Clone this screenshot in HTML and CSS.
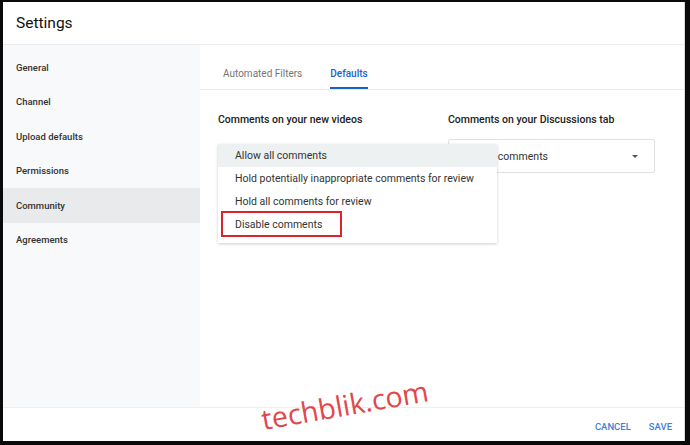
FILE: index.html
```html
<!DOCTYPE html>
<html lang="en">
<head>
    <meta charset="UTF-8">
    <meta name="viewport" content="width=device-width, initial-scale=1.0">
    <title>Settings</title>
    <link rel="stylesheet" href="styles.css">
</head>
<body>
    <div class="frame">
        <div class="dialog">
            <header class="dialog-header">
                <h1>Settings</h1>
            </header>

            <div class="dialog-body">
                <nav class="sidebar">
                    <a href="#" class="nav-item">General</a>
                    <a href="#" class="nav-item">Channel</a>
                    <a href="#" class="nav-item">Upload defaults</a>
                    <a href="#" class="nav-item">Permissions</a>
                    <a href="#" class="nav-item active">Community</a>
                    <a href="#" class="nav-item">Agreements</a>
                </nav>

                <main class="content">
                    <div class="tabs">
                        <a href="#" class="tab">Automated Filters</a>
                        <a href="#" class="tab selected">Defaults</a>
                    </div>

                    <div class="fields">
                        <div class="field">
                            <h3>Comments on your new videos</h3>
                            <div class="select-wrap">
                                <ul class="menu">
                                    <li class="highlight">Allow all comments</li>
                                    <li>Hold potentially inappropriate comments for review</li>
                                    <li>Hold all comments for review</li>
                                    <li class="marked">Disable comments<span class="mark"></span></li>
                                </ul>
                            </div>
                        </div>
                        <div class="field">
                            <h3>Comments on your Discussions tab</h3>
                            <div class="select wide">
                                <span>Allow all comments</span>
                                <span class="caret"></span>
                            </div>
                        </div>
                    </div>
                </main>
            </div>

            <footer class="dialog-footer">
                <button type="button">Cancel</button>
                <button type="button">Save</button>
            </footer>

            <div class="watermark">techblik.com</div>
        </div>
    </div>
</body>
</html>
```

FILE: styles.css
```css
/* Grundlayout */
body {
    margin: 0;
    font-family: Roboto, 'Noto Sans', sans-serif;
    color: #202020;
    background: #000;
}

.frame {
    width: 690px;
    height: 445px;
    box-sizing: border-box;
    border-style: solid;
    border-color: #0a0a0a;
    border-width: 2px 5px 4px 3px;
    background: #fff;
}

.dialog {
    position: relative;
    height: 100%;
    display: flex;
    flex-direction: column;
    border-right: 1px solid #d8d8d8;
    overflow: hidden;
}

.dialog-header {
    height: 42px;
    flex: none;
    display: flex;
    align-items: center;
    padding-left: 13px;
    border-bottom: 1px solid #e9ecef;
}

.dialog-header h1 {
    margin: 0;
    font-size: 15.5px;
    font-weight: 400;
    color: #111;
}

.dialog-body {
    flex: 1;
    display: flex;
    min-height: 0;
}

/* Seitenleiste */
.sidebar {
    width: 197px;
    flex: none;
    background: #f8f9fa;
    padding-top: 5px;
    display: flex;
    flex-direction: column;
}

.nav-item {
    height: 34.5px;
    display: flex;
    align-items: center;
    padding-left: 13px;
    font-size: 9.5px;
    font-weight: 500;
    color: #333;
    text-decoration: none;
}

.nav-item.active {
    background: #e8eaeb;
}

/* Inhalt */
.content {
    flex: 1;
}

.tabs {
    height: 45px;
    box-sizing: border-box;
    display: flex;
    gap: 28px;
    padding-left: 23px;
    border-bottom: 1px solid #e9ecef;
}

.tab {
    display: flex;
    align-items: flex-end;
    padding-bottom: 8px;
    font-size: 10px;
    color: #757575;
    text-decoration: none;
    border-bottom: 2px solid transparent;
}

.tab.selected {
    color: #1a5fd0;
    font-weight: 500;
    border-bottom-color: #1a5fd0;
}

.fields {
    display: flex;
    gap: 37px;
    padding: 23px 0 0 18px;
}

.field h3 {
    margin: 0 0 13px;
    font-size: 10.5px;
    font-weight: 500;
    color: #222;
}

.field:first-child {
    width: 193px;
}

.select-wrap {
    position: relative;
    height: 34px;
}

.select {
    height: 34px;
    box-sizing: border-box;
    display: flex;
    align-items: center;
    justify-content: space-between;
    padding: 0 16px 0 7px;
    border: 1px solid #e0e0e0;
    border-radius: 2px;
    font-size: 10.5px;
    color: #333;
}

.select.wide {
    width: 207px;
}

.caret {
    width: 0;
    height: 0;
    border-left: 3.5px solid transparent;
    border-right: 3.5px solid transparent;
    border-top: 3.5px solid #555;
}

/* Aufgeklapptes Menue */
.menu {
    position: absolute;
    top: 5px;
    left: 0;
    width: 279px;
    margin: 0;
    padding: 0 0 7px;
    list-style: none;
    background: #fff;
    box-shadow: 0 1px 3px rgba(0, 0, 0, 0.2);
    z-index: 2;
}

.menu li {
    position: relative;
    height: 23px;
    display: flex;
    align-items: center;
    padding-left: 17px;
    font-size: 10.5px;
    color: #333;
}

.menu li.highlight {
    background: #eef1f2;
}

.mark {
    position: absolute;
    left: 3px;
    top: -2px;
    width: 121px;
    height: 26px;
    box-sizing: border-box;
    border: 2px solid #d9232d;
}

/* Fusszeile */
.dialog-footer {
    height: 34px;
    box-sizing: border-box;
    flex: none;
    display: flex;
    justify-content: flex-end;
    align-items: center;
    gap: 18px;
    padding: 4px 12px 0 0;
    border-top: 1px solid #eceeef;
}

.dialog-footer button {
    padding: 0;
    border: none;
    background: none;
    font-family: inherit;
    font-size: 9.5px;
    font-weight: 500;
    text-transform: uppercase;
    color: #3d7fd8;
    cursor: pointer;
}

.watermark {
    position: absolute;
    left: 262px;
    top: 398px;
    font-family: 'Open Sans', sans-serif;
    font-size: 28.5px;
    color: #e1474c;
    transform: rotate(-10deg);
    transform-origin: left bottom;
    z-index: 3;
}
```
